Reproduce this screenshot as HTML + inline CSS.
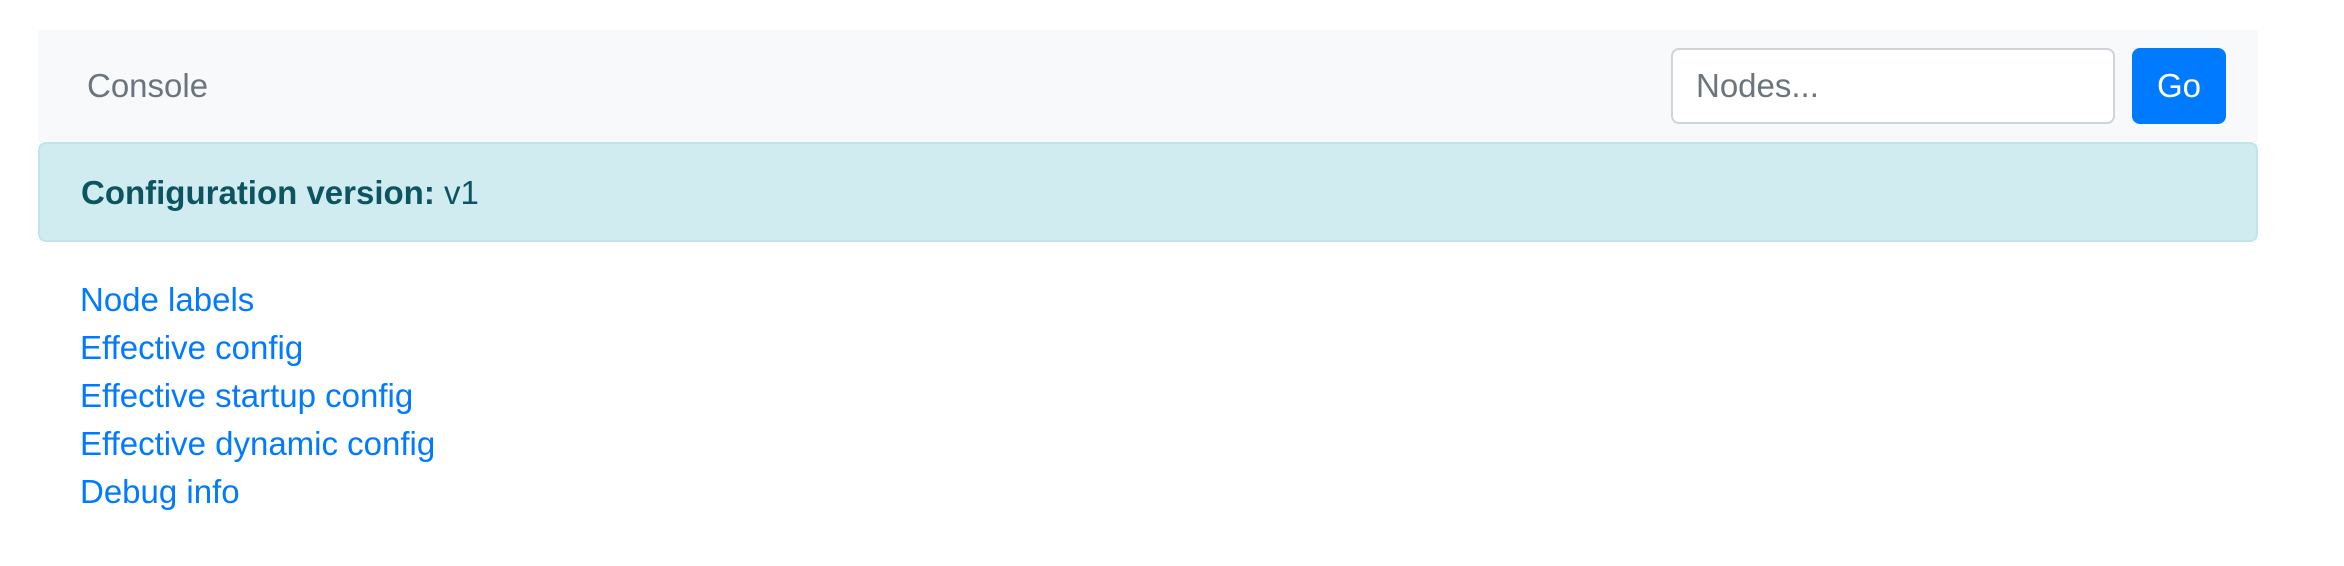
<!DOCTYPE html>
<html><head><meta charset="utf-8"><style>
*{box-sizing:border-box;margin:0;padding:0}
body{width:2344px;height:566px;background:#fff;font-family:"Liberation Sans",Helvetica,Arial,sans-serif;font-size:33px;line-height:48px;position:relative;overflow:hidden}
.nav{position:absolute;left:38px;top:30px;width:2220px;height:112px;background:#f8f9fa}
.brand{position:absolute;left:49px;top:32px;color:#6c757d;line-height:48px}
.inp{position:absolute;left:1633px;top:18px;width:444px;height:76px;border:2px solid #ced4da;border-radius:8px;background:#fff;color:#6c757d;padding-left:23px;line-height:72px}
.btn{position:absolute;left:2094px;top:18px;width:94px;height:76px;border-radius:8px;background:#007bff;color:#fff;text-align:center;line-height:76px}
.alert{position:absolute;left:38px;top:142px;width:2220px;height:100px;background:#d1ecf1;border:2px solid #bee5eb;border-radius:8px;color:#0c5460;padding-left:41px;line-height:97px}
.links{position:absolute;left:80px;top:276px;color:#007bff;line-height:48px}
</style></head><body>
<div class="nav"><div class="brand">Console</div><div class="inp">Nodes...</div><div class="btn">Go</div></div>
<div class="alert"><b>Configuration version:</b> v1</div>
<div class="links"><div>Node labels</div><div>Effective config</div><div>Effective startup config</div><div>Effective dynamic config</div><div>Debug info</div></div>
</body></html>
